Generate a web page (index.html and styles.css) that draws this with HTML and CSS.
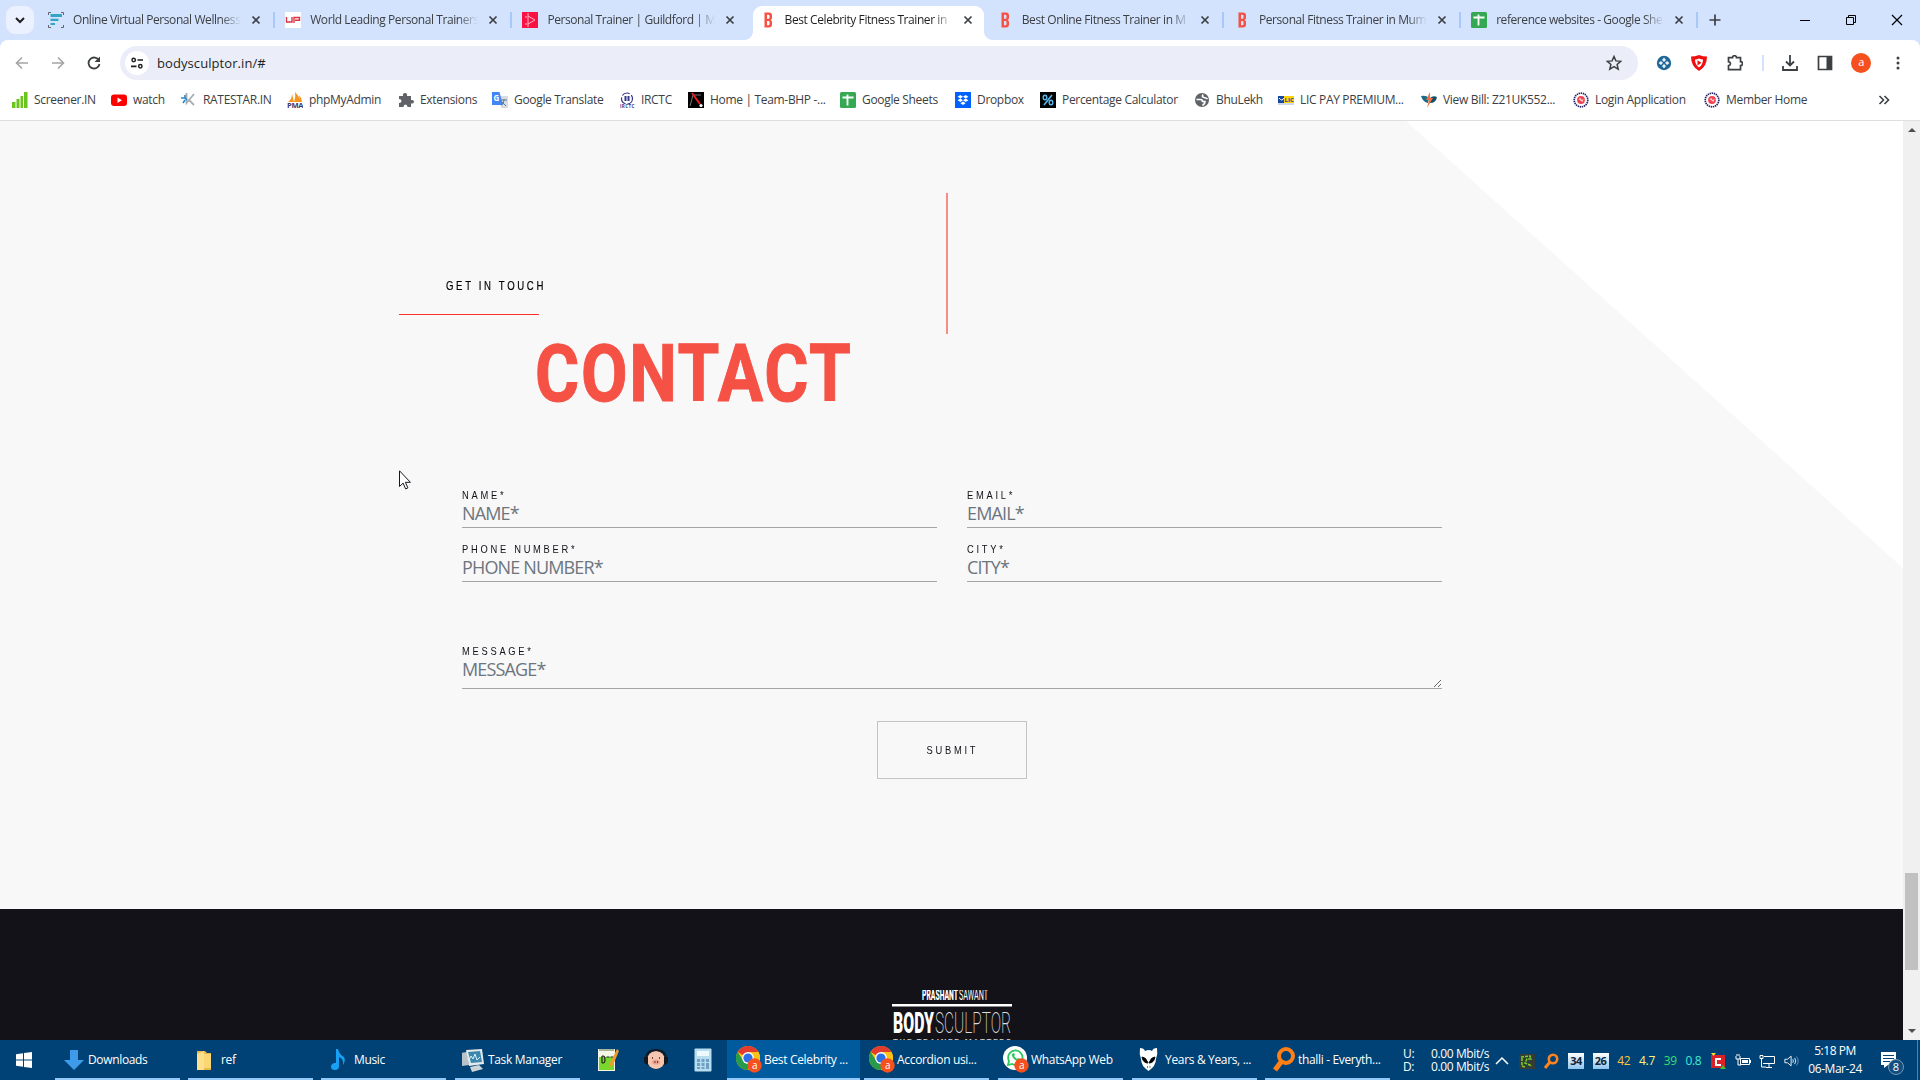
FILE: index.html
```html
<!DOCTYPE html>
<html lang="en">
<head>
<meta charset="utf-8">
<title>Best Celebrity Fitness Trainer in Mumbai</title>
<link rel="stylesheet" href="styles.css">
</head>
<body>
<svg class="defs" width="0" height="0">
  <symbol id="x" viewBox="0 0 10 10"><path d="M1.5 1.5l7 7M8.500 1.500l-7 7" stroke="#3c4043" stroke-width="1.7"/></symbol>
  <symbol id="b" viewBox="0 0 16 16"><path fill-rule="evenodd" fill="#f55145" d="M4.500 .5h4.500q3 0 3 3v2.500q0 1.500-1.500 2 1.500.5 1.500 2v2.500q0 3-3 3H4.500zM7 2.800v4h1.500q1 0 1-1v-2q0-1-1-1zM7 9v4.200h1.500q1 0 1-1V10q0-1-1-1z"/></symbol>
  <symbol id="sheet" viewBox="0 0 16 16"><rect width="16" height="16" rx="1.500" fill="#34a853"/><path d="M2.500 5.500h11M7.500 2.500v11" stroke="#fff" stroke-width="1.800"/></symbol>
  <symbol id="seal" viewBox="0 0 16 16"><circle cx="8" cy="8" r="6.800" fill="#fff" stroke="#24246e" stroke-width="1.700" stroke-dasharray="1.400 .7"/><circle cx="8" cy="8" r="3.900" fill="#f04450"/><path d="M5.500 7l2-1 1 2 2-1-1 3z" fill="#fbd5d5"/></symbol>
  <symbol id="chrome" viewBox="0 0 26 28"><circle cx="12" cy="12" r="12" fill="#fbc116"/><path d="M12 12L1.600 6A12 12 0 0 1 22.400 6H12z" fill="#e33b2e"/><path d="M1.600 6A12 12 0 0 0 12 24l5-9-9.500 0z" fill="#269b4a"/><path d="M12 6h10.400a12 12 0 0 1-10.400 18l5.200-9z" fill="#fbc116"/><circle cx="12" cy="12" r="5.900" fill="#fff"/><circle cx="12" cy="12" r="4.600" fill="#2e70e8"/><circle cx="18.500" cy="19.500" r="7.200" fill="#f4511e"/><text x="18.500" y="23" text-anchor="middle" font-size="10" fill="#fff">a</text></symbol>
</svg>

<header class="tabs">
  <div class="tab-menu"><svg width="10" height="8"><path d="M1 2l4 4 4-4" fill="none" stroke="#1f1f1f" stroke-width="2"/></svg></div>
  <div class="tab"><svg class="fav" viewBox="0 0 16 16"><path d="M.5 3V.5H3M13 .5h2.500V3M.5 13v2.500H3M13 15.500h2.500V13" fill="none" stroke="#5d6570"/><path d="M2.500 2h11.500v3H2.500zM2.500 6.700h8v2.300h-8zM2.500 11h4.500v2H2.500z" fill="#35a5c4"/></svg><span class="title">Online Virtual Personal Wellness</span><svg class="close"><use href="#x"/></svg><i class="sep"></i></div>
  <div class="tab"><svg class="fav" viewBox="0 0 16 16"><path fill="#fff" d="M0 0h16v16H0z"/><path d="M1.500 5v5H7V5M9 11V5.500h5.500v2.800H10" fill="none" stroke="#dc3545" stroke-width="1.400"/></svg><span class="title">World Leading Personal Trainers</span><svg class="close"><use href="#x"/></svg><i class="sep"></i></div>
  <div class="tab"><svg class="fav" viewBox="0 0 16 16"><path fill="#fa1242" d="M0 0h16v16H0z"/><path d="M6 1v14M6 4l7 4-7 4M4 4v2M4 11v2" fill="none" stroke="#ffb5c3"/></svg><span class="title">Personal Trainer | Guildford | Mo</span><svg class="close"><use href="#x"/></svg></div>
  <div class="tab active"><svg class="fav"><use href="#b"/></svg><span class="title">Best Celebrity Fitness Trainer in</span><svg class="close"><use href="#x"/></svg></div>
  <div class="tab"><svg class="fav"><use href="#b"/></svg><span class="title">Best Online Fitness Trainer in M</span><svg class="close"><use href="#x"/></svg><i class="sep"></i></div>
  <div class="tab"><svg class="fav"><use href="#b"/></svg><span class="title">Personal Fitness Trainer in Mum</span><svg class="close"><use href="#x"/></svg><i class="sep"></i></div>
  <div class="tab"><svg class="fav"><use href="#sheet"/></svg><span class="title">reference websites - Google She</span><svg class="close"><use href="#x"/></svg><i class="sep"></i></div>
  <svg class="plus" width="12" height="12"><path d="M6 .5v11M.5 6h11" stroke="#3c4043" stroke-width="1.700"/></svg>
  <div class="window-buttons">
    <svg width="12" height="12"><path d="M1 6.500h10" stroke="#000"/></svg>
    <svg width="12" height="12"><path d="M1.500 3.500h7v7h-7zM3.500 3V1.500h7v7H9" fill="none" stroke="#000"/></svg>
    <svg width="12" height="12"><path d="M1 1l10 10M11 1L1 11" stroke="#000" stroke-width="1.200"/></svg>
  </div>
</header>

<nav class="toolbar">
  <svg width="14" height="14"><path d="M13 7H2M7 1.500L1.500 7 7 12.500" fill="none" stroke="#a3a5a8" stroke-width="1.600"/></svg>
  <svg width="14" height="14"><path d="M1 7h11M7 1.500L12.500 7 7 12.500" fill="none" stroke="#a3a5a8" stroke-width="1.600"/></svg>
  <svg width="14" height="14"><path d="M12 4.500A5.500 5.500 0 1 0 12.500 8" fill="none" stroke="#3c4043" stroke-width="1.800"/><path d="M13 .5v5.500H7.500z" fill="#3c4043"/></svg>
  <div class="address">
    <span class="site"><svg width="12" height="12"><path d="M6.500 3H12M0 9.300h5.500" stroke="#1f1f1f" stroke-width="1.700"/><circle cx="2.700" cy="3" r="1.700" fill="none" stroke="#1f1f1f" stroke-width="1.500"/><circle cx="9.300" cy="9.300" r="1.700" fill="none" stroke="#1f1f1f" stroke-width="1.500"/></svg></span>
    <span class="url">bodysculptor.in/#</span>
    <svg width="16" height="16"><path d="M8 1.500l1.900 4.400 4.800.4-3.600 3.200 1.100 4.700L8 11.700l-4.200 2.500 1.100-4.700-3.600-3.200 4.800-.4z" fill="none" stroke="#3c4043" stroke-width="1.500"/></svg>
  </div>
  <div class="extensions">
    <svg viewBox="0 0 16 16"><circle cx="8" cy="8" r="7.200" fill="#1f6797"/><path d="M8 2.500l2 2.500-2 2-2-2zM8 13.500l2-2.500-2-2-2 2zM2.500 8L5 6l2 2-2 2zM13.500 8L11 6 9 8l2 2z" fill="#e6f0f7"/></svg>
    <svg viewBox="0 0 16 16"><path d="M0 1.500q4 0 8-1.500 4 1.500 8 1.500 0 10-8 14.500Q0 11.500 0 1.500z" fill="#f00e0e"/><path d="M4 4.500q2 0 4-1 2 1 4 1 0 5-4 8-4-3-4-8z" fill="#fff"/><path d="M6.500 5.200l4 2.600-4 2.600z" fill="#f00e0e"/></svg>
    <svg viewBox="0 0 16 16"><path d="M1.500 2.700h4q0-2 2-2t2 2h4v4q2 0 2 2t-2 2v4h-12v-4q2-.4 2-2t-2-2z" fill="none" stroke="#3c4043" stroke-width="1.700"/></svg>
    <i></i>
    <svg viewBox="0 0 16 16"><path d="M8 0v10M4 6.500l4 4 4-4M1 11v4h14v-4" fill="none" stroke="#3c4043" stroke-width="1.800"/></svg>
    <svg viewBox="0 0 16 16"><path d="M1.500 1.500h13v13h-13z" fill="none" stroke="#3c4043" stroke-width="1.700"/><path d="M9.500 1h5.500v14H9.500z" fill="#3c4043"/></svg>
    <b>a</b>
    <svg viewBox="0 0 16 16" fill="#3c4043"><circle cx="8" cy="3" r="1.500"/><circle cx="8" cy="8" r="1.500"/><circle cx="8" cy="13" r="1.500"/></svg>
  </div>
</nav>

<nav class="bookmarks">
  <span><svg viewBox="0 0 16 16"><path d="M0 10h3.500v6H0zM4.500 7h3v9h-3zM8.500 4H11v12H8.500zM12 0h3.500v16H12z" fill="#69c51c"/></svg>Screener.IN</span>
  <span><svg viewBox="0 0 16 16"><rect y="2.500" width="16" height="11.500" rx="3" fill="#f00"/><path d="M6.500 5.500v5.500L11 8.200z" fill="#fff"/></svg>watch</span>
  <span><svg viewBox="0 0 16 16"><path d="M5.500 1v10L13 2M8 8l5 5" fill="none" stroke="#a9adb2" stroke-width="1.800"/><path d="M0 6h4l2 2M4 3v3M2 11l2-3" stroke="#2588cb" stroke-width="1.600" fill="none"/></svg>RATESTAR.IN</span>
  <span><svg viewBox="0 0 16 16"><path d="M1 10Q5 7 5 2l2 8zM7 10Q9 5 8 0q5 5 5 10zM12 3q3 3 3 7h-2z" fill="#f7951d"/><text x="0" y="15.500" font-size="6.500" font-weight="bold" textLength="16" lengthAdjust="spacingAndGlyphs" fill="#3a3a73">PMA</text></svg>phpMyAdmin</span>
  <span><svg viewBox="0 0 16 16"><path d="M1 4h4Q4.500 1 7 1t2 3h4v4q3-.5 3 1.700T13 11.500V15H9.500q0-2.500-2-2.500t-2 2.500H1v-4q2.500 0 2.500-2T1 7z" fill="#5f6368"/></svg>Extensions</span>
  <span><svg viewBox="0 0 16 16"><path d="M7 4h9v12H9z" fill="#d9dce0"/><path d="M0 0h7.500L11 13H0z" fill="#4285f4"/><text x="1.500" y="9" font-size="8" font-weight="bold" fill="#fff">G</text><path d="M9 8h6M12 7v1q0 4-3 5M10 10l4 4" stroke="#607d8b" fill="none"/></svg>Google Translate</span>
  <span><svg viewBox="0 0 16 16"><circle cx="8" cy="6.500" r="5.500" fill="none" stroke="#35358c" stroke-width="1.200" stroke-dasharray="8 2"/><path d="M5.500 4h2v5h-2zM8.500 4h2v5h-2z" fill="#35358c"/><text x="1" y="16" font-size="4.500" font-weight="bold" textLength="14" fill="#35358c">IRCTC</text></svg>IRCTC</span>
  <span><svg viewBox="0 0 16 16"><path d="M0 0h16v16H0z"/><path d="M2 14L5 3l8 0" stroke="#777" fill="none"/><path d="M4 1l8 11" stroke="#ed1c24" stroke-width="2"/><circle cx="13" cy="13.500" r="1.600" fill="#fff"/></svg>Home | Team-BHP -...</span>
  <span><svg><use href="#sheet"/></svg>Google Sheets</span>
  <span><svg viewBox="0 0 16 16"><path d="M0 0h16v16H0z" fill="#0061ff"/><path d="M5.300 3L8 4.700 5.300 6.400 2.600 4.700zM10.700 3l2.700 1.700-2.700 1.700L8 4.700zM5.300 6.500L8 8.200 5.300 9.900 2.600 8.200zM10.700 6.500l2.700 1.700-2.700 1.700L8 8.200zM8 9.600l2.600 1.700L8 13l-2.600-1.700z" fill="#fff"/></svg>Dropbox</span>
  <span><svg viewBox="0 0 16 16"><path d="M0 0h16v16H0z"/><path d="M12 3L4 13" stroke="#5bb8ee" stroke-width="1.600"/><ellipse cx="5" cy="5.500" rx="1.800" ry="2.300" fill="none" stroke="#5bb8ee" stroke-width="1.400"/><ellipse cx="11" cy="10.500" rx="1.800" ry="2.300" fill="none" stroke="#5bb8ee" stroke-width="1.400"/></svg>Percentage Calculator</span>
  <span><svg viewBox="0 0 16 16"><circle cx="8" cy="8" r="7" fill="#5f6368"/><path d="M2.500 7.500h4q2 0 2 2h2.500q0 2.500-2.500 4M9 2.500q-1.500 2.500 1 3t3.500 1.500" fill="none" stroke="#fff" stroke-width="1.700"/></svg>BhuLekh</span>
  <span><svg viewBox="0 0 16 16"><path d="M0 4h8v7H0z" fill="#17479e"/><path d="M6 4h10v7H6z" fill="#ffd400"/><path d="M0 12h16" stroke="#9cb2d7"/><path d="M1 6q3 4 5 0" stroke="#fff" fill="none"/><text x="6.500" y="10" font-size="6" font-weight="bold" textLength="9" fill="#17479e">LIC</text></svg>LIC PAY PREMIUM...</span>
  <span><svg viewBox="0 0 16 16"><path d="M0 4q5-1 8 2l-1 5q-5-1-7-7z" fill="#176b88"/><path d="M9 6q3-3 7-1-1 6-7 6z" fill="#154d67"/><path d="M9 0L5 8h3l-2 8 6-10H9z" fill="#f3703a"/></svg>View Bill: Z21UK552...</span>
  <span><svg><use href="#seal"/></svg>Login Application</span>
  <span><svg><use href="#seal"/></svg>Member Home</span>
  <svg class="more" width="12" height="10"><path d="M1.500 1l4 4-4 4M6.500 1l4 4-4 4" fill="none" stroke="#3c4043" stroke-width="1.600"/></svg>
</nav>

<div class="viewport">
  <main class="page">
    <section class="contact">
      <i class="vline"></i>
      <div class="intro">
        <p class="eyebrow">GET IN TOUCH</p>
        <i class="hline"></i>
        <h1>CONTACT</h1>
      </div>
      <form class="form">
        <label><span>NAME*</span><input placeholder="NAME*"></label>
        <label><span>EMAIL*</span><input placeholder="EMAIL*"></label>
        <label><span>PHONE NUMBER*</span><input placeholder="PHONE NUMBER*"></label>
        <label><span>CITY*</span><input placeholder="CITY*"></label>
        <label class="message"><span>MESSAGE*</span><textarea placeholder="MESSAGE*"></textarea></label>
        <button type="button"><span>SUBMIT</span></button>
      </form>
    </section>
    <footer class="footer">
      <svg class="logo" width="122" height="60" fill="#fff">
        <g font-family="Roboto, sans-serif">
          <text x="31" y="10" font-size="14" font-weight="900" textLength="36" lengthAdjust="spacingAndGlyphs">PRASHANT</text>
          <text x="68" y="10" font-size="14" font-weight="400" textLength="29" lengthAdjust="spacingAndGlyphs">SAWANT</text>
          <path d="M1 14h120v2.500H1z"/>
          <text x="2" y="43" font-size="30" font-weight="900" textLength="41" lengthAdjust="spacingAndGlyphs">BODY</text>
          <text x="44" y="43" font-size="30" font-weight="200" fill="#ddd" textLength="76" lengthAdjust="spacingAndGlyphs">SCULPTOR</text>
          <text x="2" y="54" font-size="8" font-weight="700" fill="#ccc" textLength="118">THE TRAINER MATTERS</text>
        </g>
      </svg>
    </footer>
  </main>
  <aside class="scrollbar"><i class="up"></i><i class="thumb"></i><i class="down"></i></aside>
</div>

<footer class="taskbar">
  <div class="start"><svg width="16" height="16"><path d="M0 2.300l7-1v6.200H0zM8 1.100L16 0v7.500H8zM0 8.500h7v6.200l-7-1zM8 8.500h8V16l-8-1.100z" fill="#fff"/></svg></div>
  <div class="task"><svg viewBox="0 0 26 28"><path d="M8 4h8v10h6L12 24 2 14h6z" fill="#3d9be9"/></svg>Downloads</div>
  <div class="task"><svg viewBox="0 0 26 28"><path d="M2 5h8l2 2h4v17H2z" fill="#e6b94f"/><path d="M4 7l5-2v19H2V8z" fill="#ffe08a"/><path d="M9 8h7v14H9z" fill="#fbd774"/></svg>ref</div>
  <div class="task"><svg viewBox="0 0 26 28"><path d="M10 3q1 5 6 8 2 3-1 8 1-6-4-8v9q0 4-4 4t-4-3 3-4l2 0V3z" fill="#18a0f4"/></svg>Music</div>
  <div class="task tm"><svg viewBox="0 0 26 28"><path d="M-1 7l6-1 2 13-7 1z" fill="#b9c3ca"/><path d="M4 4l16-1 2 15-15 2z" fill="#e4e9ec"/><path d="M6 6l12-1 2 11-11 1z" fill="#3d87ae"/><path d="M7 14l2-4 2 3 2-5 2 6 3-3" fill="none" stroke="#d9f4ff"/><path d="M8 21l9-2 4 4-11 3z" fill="#ccd4d8"/></svg>Task Manager</div>
  <div class="pin"><svg width="24" height="26"><path d="M2 2h17v22H2z" fill="#f3f6e9"/><path d="M3 10h15v13H3z" fill="#78d82b"/><path d="M3 2h15v2H3z" fill="#a7b49a"/><path d="M6 9v7M6 9h1q2 0 2 3.500T7 16H6M10.500 10h3M14.500 10h3" stroke="#222" stroke-width="1.200" fill="none"/><path d="M21 2l2 2-6 14-3 2v-4z" fill="#eb9d30"/></svg></div>
  <div class="pin"><svg width="24" height="26"><circle cx="12" cy="13" r="9" fill="#f6c7ae"/><path d="M2 13Q2 3 12 3t10 10" fill="none" stroke="#16181c" stroke-width="2"/><path d="M0 10h4v8Q0 17 0 14zM20 10h4v4q0 3-4 4z" fill="#16181c"/><ellipse cx="12" cy="15" rx="4" ry="2.600" fill="#eda08c"/><path d="M8 11h1M15 11h1M10.500 15h1M13 15h1" stroke="#3a211b" stroke-width="1.600"/></svg></div>
  <div class="pin"><svg width="18" height="24"><rect x=".5" y=".5" width="17" height="23" rx="1" fill="#b7ddef"/><path d="M3 3h12v5H3z" fill="#eef9ff"/><path d="M3 11h3v3H3zM7.500 11h3v3h-3zM12 11h3v3h-3zM3 15h3v3H3zM7.500 15h3v3h-3zM12 15h3v6h-3zM3 19h3v2H3zM7.500 19h3v2h-3z" fill="#6f9fc3"/></svg></div>
  <div class="task current"><svg><use href="#chrome"/></svg>Best Celebrity ...</div>
  <div class="task c"><svg><use href="#chrome"/></svg>Accordion usi...</div>
  <div class="task c"><svg viewBox="0 0 26 28"><circle cx="12" cy="12" r="12" fill="#fff"/><path d="M5 19l1-4a7.200 7.200 0 1 1 3 3z" fill="none" stroke="#2cc963" stroke-width="1.800"/><path d="M9 8q-1 2 2 5t5 2l1-2-2-1-1 1-3-3 1-1-1-2z" fill="#2cc963"/><circle cx="18.500" cy="19.500" r="7.200" fill="#f4511e"/><text x="18.500" y="23" text-anchor="middle" font-size="10" fill="#fff">a</text></svg>WhatsApp Web</div>
  <div class="task"><svg viewBox="0 0 26 28"><path d="M1 2q4 0 5 3 4-2 7 0 1-3 5-3 1 6-1 11 0 7-7.500 12Q2 20 2 13 0 8 1 2z" fill="#fff"/><path d="M3 11q4 0 6 6-5 0-6-6zM16 11q-4 0-6 6 5 0 6-6zM8 21h1M10.500 21h1" fill="#050505" stroke="#050505"/></svg>Years &amp; Years, ...</div>
  <div class="task"><svg viewBox="0 0 26 28"><circle cx="14" cy="10" r="7" fill="none" stroke="#ff7f17" stroke-width="4"/><path d="M9 16l-6 8" stroke="#ff7f17" stroke-width="5"/></svg>thalli - Everyth...</div>
  <div class="net"><span>U:</span><span>0.00 Mbit/s</span><span>D:</span><span>0.00 Mbit/s</span></div>
  <div class="tray">
    <svg viewBox="0 0 16 16"><path d="M2 11l6-6 6 6" fill="none" stroke="#fff" stroke-width="1.500"/></svg>
    <svg viewBox="0 0 16 16"><path d="M0 1h16v15H0z" fill="#353b37"/><path d="M2 4l9-1 1 3h-4l-2 4 7 3M3 5v8l3 1" fill="none" stroke="#78d32d" stroke-width="1.500" stroke-dasharray="3 1"/></svg>
    <svg viewBox="0 0 16 16"><circle cx="10" cy="6" r="4.200" fill="none" stroke="#ff831f" stroke-width="2.600"/><path d="M7 9l-5 6" stroke="#ff831f" stroke-width="3"/></svg>
    <b class="temp">34</b><b class="temp">26</b>
    <span class="num orange">42</span><span class="num yellow">4.7</span><span class="num green">39</span><span class="num teal">0.8</span>
    <svg viewBox="0 0 16 16"><path d="M1 2h14v13H1z" fill="#da2228"/><path d="M11 6H6v6h5" fill="none" stroke="#fff" stroke-width="2"/><path d="M1 0h5L3.500 3z" fill="#ffe327"/><path d="M10 16l3-4 3 4z" fill="#36c536"/></svg>
    <svg viewBox="0 0 16 16"><path d="M5.500 5.500h9v6h-9z" fill="none" stroke="#fff"/><path d="M7 7h6v3H7zM15 7h1v3h-1z" fill="#fff"/><path d="M1 3v3h4V3M2 3V1M4 3V1M3 6v6h3" fill="none" stroke="#fff"/></svg>
    <svg viewBox="0 0 16 16"><path d="M5 3.500h10.500v7H4M1 2.500h3v3H1zM2.500 6v8H7M10 11v3M7 14.500h6" fill="none" stroke="#fff"/></svg>
    <svg viewBox="0 0 18 16"><path d="M1 6v4h3l4 3.500v-11L4 6z" fill="none" stroke="#fff"/><path d="M10 6q1 2 0 4M12 4.500q2.500 3.500 0 7" fill="none" stroke="#fff"/><path d="M14 3q4 5 0 10" fill="none" stroke="#7597b3"/></svg>
  </div>
  <time class="clock">5:18 PM<br>06-Mar-24</time>
  <div class="notes"><svg width="30" height="30"><path d="M2 4h15v13H9l-4 3v-3H2z" fill="#fff"/><path d="M4 7.500h11M4 10.500h11M4 13.500h7" stroke="#004275"/><circle cx="17" cy="19" r="7.500" fill="#114f80" stroke="#7297b5"/><text x="17" y="23" text-anchor="middle" font-size="11" fill="#fff">8</text></svg></div>
</footer>
<svg class="cursor" width="13" height="20"><path d="M.5.800v15.700l3.600-3.400 2.500 5.800 2.300-1-2.500-5.600h5z" fill="#fff" stroke="#15151b"/></svg>
</body>
</html>
```
FILE: styles.css
```css
* { box-sizing: border-box; }
body {
  margin: 0;
  width: 1920px;
  height: 1080px;
  overflow: hidden;
  display: flex;
  flex-direction: column;
  font: 12px/16px "Open Sans", "Noto Sans", sans-serif;
  color: #3c4043;
  background: #fff;
}
svg { flex: none; display: block; }
.defs { position: absolute; }

/* Tab strip */
.tabs { height: 48px; margin-bottom: -8px; padding: 6px 17px 8px 6px; display: flex; align-items: flex-start; background: #d3e2fd; }
.tab-menu { width: 28px; height: 28px; margin-right: 5px; border-radius: 9px; background: #ebf1fe; display: grid; place-items: center; }
.tab { position: relative; width: 237.200px; height: 34px; padding: 0 13px 6px 9px; display: flex; align-items: center; }
.fav { width: 16px; height: 16px; margin-right: 9px; }
.title { width: 168px; overflow: hidden; white-space: nowrap; letter-spacing: -.42px; -webkit-mask-image: linear-gradient(90deg, #000 148px, transparent 168px); mask-image: linear-gradient(90deg, #000 148px, transparent 168px); }
.close { width: 10px; height: 10px; margin-left: 10px; }
.sep { position: absolute; right: 1px; top: 6px; width: 2px; height: 16px; background: #a8c7fa; }
.tab.active { color: #1f1f1f; }
.tab.active::before { content: ""; position: absolute; z-index: 0; left: 2px; top: 0; width: 231px; height: 34px; border-radius: 9px 9px 0 0; background: #fff; }
.tab.active::after { content: ""; position: absolute; left: -6px; right: -4px; bottom: 0; height: 8px; background: radial-gradient(circle at 0 0, transparent 7.500px, #fff 8px) 0 0 / 8px 8px no-repeat, radial-gradient(circle at 100% 0, transparent 7.500px, #fff 8px) 100% 0 / 8px 8px no-repeat; }
.tab.active > * { position: relative; z-index: 1; }
.plus { margin: 8px 0 0 10px; }
.window-buttons { margin: 8px 0 0 auto; display: flex; gap: 34px; }

/* Toolbar */
.toolbar { position: relative; height: 46px; padding: 0 14px 0 15px; display: flex; align-items: center; gap: 22px; border-radius: 8px 8px 0 0; background: #fff; }
.address { width: 1518px; height: 34px; margin-left: -3px; padding: 0 16px 0 5px; border-radius: 17px; background: #ebeef8; display: flex; align-items: center; }
.site { width: 24px; height: 24px; border-radius: 12px; background: #fff; display: grid; place-items: center; }
.url { flex: 1; margin-left: 8px; font-size: 13px; letter-spacing: .08px; color: #1f1f1f; }
.extensions { flex: 1; display: flex; align-items: center; justify-content: space-between; margin-left: -4px; }
.extensions svg { width: 16px; height: 16px; }
.extensions svg:nth-child(3) { margin-left: 2px; }
.extensions i { width: 2px; height: 16px; background: #d3e2fd; }
.extensions b { width: 20px; height: 20px; border-radius: 50%; background: #f4511e; color: #fff; font-weight: 400; font-size: 11px; line-height: 18px; text-align: center; }

/* Bookmarks */
.bookmarks { height: 35px; padding: 0 0 7px 12px; display: grid; grid-template-columns: 99px 70px 106px 111px 94px 127px 69px 152px 115px 85px 154px 84px 143px 152px 131px 174px 12px; align-items: center; border-bottom: 1px solid #dfdfdf; letter-spacing: -.32px; white-space: nowrap; }
.bookmarks span { display: flex; align-items: center; gap: 6px; }
.bookmarks span svg { width: 16px; height: 16px; }

/* Web page */
.viewport { height: 919px; display: flex; }
.page { width: 1903px; display: flex; flex-direction: column; overflow: hidden; }
.contact { position: relative; height: 788px; background: #f8f8f8; }
.contact::before { content: ""; position: absolute; right: 0; top: 0; width: 497px; height: 447px; background: #fff; clip-path: polygon(0 0, 100% 0, 100% 100%); }
.vline { position: absolute; left: 946px; top: 72px; width: 2px; height: 141px; background: #f78d86; }
.intro { padding: 157px 0 0 399px; }
.eyebrow { margin: 0 0 20px 47px; font: 12px/16px "Liberation Sans", sans-serif; letter-spacing: 3.300px; color: #000; transform: scaleX(.8); transform-origin: 0 0; -webkit-text-stroke: .2px #000; }
.hline { display: block; width: 140px; height: 1px; background: #fa3228; }
h1 { margin: 19px 0 0 136px; width: 380px; font: 700 79px/80px Roboto, sans-serif; letter-spacing: 2px; color: #f55145; transform: scaleX(.855); transform-origin: 0 0; -webkit-text-stroke: 1px #f55145; }
.form { width: 980px; margin: 73px 0 0 462px; display: grid; grid-template-columns: 475px 475px; column-gap: 30px; }
.form label { display: flex; flex-direction: column; height: 54px; }
.form span { font: 11px/16px "Liberation Sans", sans-serif; letter-spacing: 3.200px; color: #111118; transform: scaleX(.85); transform-origin: 0 0; }
.form input, .form textarea { width: 100%; height: 25px; padding: 0 0 4px; border: 0; border-bottom: 1px solid #a5a5a5; background: none; outline: 0; font: 18px/20px "Open Sans", sans-serif; letter-spacing: -.85px; }
.form textarea { height: 30px; min-height: 0; resize: both; overflow: hidden; }
::placeholder { color: #6c757d; opacity: 1; }
.form .message { grid-column: 1 / 3; height: 78px; margin-top: 48px; }
.form button { grid-column: 1 / 3; width: 150px; height: 58px; margin-left: 415px; padding: 0; border: 1px solid #c4c4c4; background: none; }
.form button span { display: inline-block; transform-origin: 50% 0; }
.footer { height: 131px; padding: 81px 0 0 891px; background: #131218; overflow: hidden; }
.scrollbar { width: 17px; padding: 7px 0; background: #f0f0f0; display: flex; flex-direction: column; align-items: center; }
.up, .down { border: 4px solid transparent; border-top: 0; border-bottom-color: #505050; }
.thumb { width: 13px; height: 97px; margin-top: 741px; background: #c1c1c1; }
.down { margin-top: auto; border-bottom: 0; border-top: 4px solid #505050; }

/* Taskbar */
.taskbar { height: 40px; display: flex; background: #004275; color: #fff; white-space: nowrap; }
.start { width: 55px; padding: 12px 0 0 16px; }
.task { width: 125px; margin-right: 8px; padding: 1px 0 0 7px; border-bottom: 2px solid #93c9f8; display: flex; align-items: center; letter-spacing: -.34px; }
.task svg { width: 26px; height: 28px; }
.task.tm { margin: 0 0 0 1px; }
.pin { width: 47.700px; display: grid; place-items: center; }
.tm + .pin { margin-left: 4px; }
.current { width: 133px; margin: 0 4px 0 0; padding-left: 9px; gap: 2px; background: #005a9e; }
.task.c { padding-left: 5px; gap: 2px; width: 125px; margin-right: 9px; }
.net { display: grid; grid-template-columns: 28px 57px; align-content: center; line-height: 13px; margin-left: 5px; letter-spacing: -.4px; }
.tray { margin-left: 6px; width: 306px; display: flex; align-items: center; justify-content: space-between; padding-top: 1px; }
.tray svg { width: 16px; height: 16px; }
.temp { width: 16px; height: 16px; background: linear-gradient(#fff, #8ec5ef); color: #10243a; font-size: 11px; text-align: center; letter-spacing: -.5px; }
.num { letter-spacing: -.3px; }
.orange { color: #ffc33e; }
.yellow { color: #fff27a; }
.green { color: #35df72; }
.teal { color: #40ebd0; }
.clock { margin-left: 6px; width: 58px; text-align: center; line-height: 18px; padding-top: 2px; letter-spacing: -.45px; }
.notes { margin-left: 15px; width: 39px; padding-top: 8px; border-right: 1px solid #5481a4; }
.cursor { position: absolute; left: 399px; top: 470px; }
```
